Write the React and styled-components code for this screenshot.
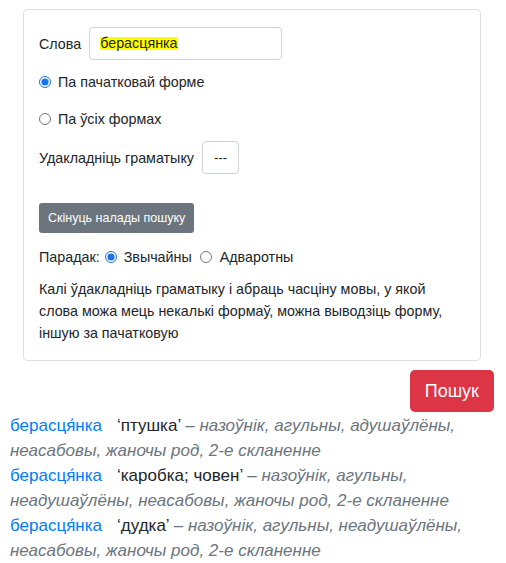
import React from "react";
import styled, { createGlobalStyle } from "styled-components";

const GlobalStyle = createGlobalStyle`
  body {
    margin: 0;
    background: #fff;
    font-family: "Liberation Sans", Arial, sans-serif;
    color: #212529;
  }
`;

const Page = styled.div`
  padding: 9px 12px 0 10px;
`;

const Card = styled.div`
  margin: 0 13px;
  border: 1px solid #dfdfdf;
  border-radius: 4px;
  padding: 17px 15px 16px;
  font-size: 14.3px;
  line-height: 22px;
`;

const Row = styled.div`
  display: flex;
  align-items: center;
  gap: ${(props) => props.gap ?? 8}px;
  margin-top: ${(props) => props.top || 0}px;
`;

const FakeInput = styled.div`
  width: 193px;
  height: 33px;
  box-sizing: border-box;
  border: 1px solid #ced4da;
  border-radius: 4px;
  padding: 0 10px;
  display: flex;
  align-items: center;
`;

const Mark = styled.span`
  background: #ffff00;
  line-height: 13px;
`;

const Select = styled.div`
  width: 37px;
  height: 33px;
  box-sizing: border-box;
  border: 1px solid #ced4da;
  border-radius: 4px;
  display: flex;
  align-items: center;
  justify-content: center;
  font-size: 13px;
`;

const Radio = styled.input.attrs({ type: "radio" })`
  margin: 0 ${(props) => props.after ?? 7}px 0 ${(props) => props.before ?? 0}px;
  width: 12px;
  height: 12px;
  accent-color: #1a73e8;
`;

const Label = styled.label`
  display: flex;
  align-items: center;
`;

const ResetButton = styled.button`
  margin-top: 29px;
  height: 30px;
  padding: 0 9px;
  background: #6c757d;
  color: #fff;
  border: none;
  border-radius: 3px;
  font-family: inherit;
  font-size: 12.5px;
  align-self: flex-start;
`;

const Column = styled.div`
  display: flex;
  flex-direction: column;
`;

const Note = styled.p`
  margin: 10px 0 0;
`;

const SearchRow = styled.div`
  display: flex;
  justify-content: flex-end;
  margin-top: 9px;
`;

const SearchButton = styled.button`
  height: 42px;
  padding: 0 15px;
  background: #dc3545;
  color: #fff;
  border: none;
  border-radius: 5px;
  font-family: inherit;
  font-size: 18px;
`;

const Results = styled.div`
  margin-top: 2px;
  font-size: 17px;
  line-height: 24.6px;
`;

const Entry = styled.div`
  margin-bottom: 1px;
`;

const Lemma = styled.span`
  color: #007bff;
  margin-right: 15px;
`;

const Gloss = styled.span`
  color: #212529;
`;

const Grammar = styled.span`
  color: #6c757d;
  font-style: italic;
`;

const entries = [
  { gloss: "птушка", grammar: "назоўнік, агульны, адушаўлёны, неасабовы, жаночы род, 2-е скланенне" },
  { gloss: "каробка; човен", grammar: "назоўнік, агульны, неадушаўлёны, неасабовы, жаночы род, 2-е скланенне" },
  { gloss: "дудка", grammar: "назоўнік, агульны, неадушаўлёны, неасабовы, жаночы род, 2-е скланенне" }
];

export default function App() {
  return (
    <Page>
      <GlobalStyle />
      <Card>
        <Column>
          <Row>
            <span>Слова</span>
            <FakeInput>
              <Mark>берасцянка</Mark>
            </FakeInput>
          </Row>
          <Row top={11}>
            <Label>
              <Radio name="form" defaultChecked />
              Па пачатковай форме
            </Label>
          </Row>
          <Row top={15}>
            <Label>
              <Radio name="form" />
              Па ўсіх формах
            </Label>
          </Row>
          <Row top={11}>
            <span>Удакладніць граматыку</span>
            <Select>---</Select>
          </Row>
          <ResetButton>Скінуць налады пошуку</ResetButton>
          <Row top={13} gap={0}>
            <span>Парадак:</span>
            <Label>
              <Radio name="order" before={5} after={7} defaultChecked />
              Звычайны
            </Label>
            <Label>
              <Radio name="order" before={8} after={8} />
              Адваротны
            </Label>
          </Row>
          <Note>
            Калі ўдакладніць граматыку і абраць часціну мовы, у якой слова
            можа мець некалькі формаў, можна выводзіць форму, іншую за
            пачатковую
          </Note>
        </Column>
      </Card>
      <SearchRow>
        <SearchButton>Пошук</SearchButton>
      </SearchRow>
      <Results>
        {entries.map((e, i) => (
          <Entry key={i}>
            <Lemma>берасця́нка</Lemma>
            <Gloss>‘{e.gloss}’</Gloss> <Grammar>– {e.grammar}</Grammar>
          </Entry>
        ))}
      </Results>
    </Page>
  );
}
